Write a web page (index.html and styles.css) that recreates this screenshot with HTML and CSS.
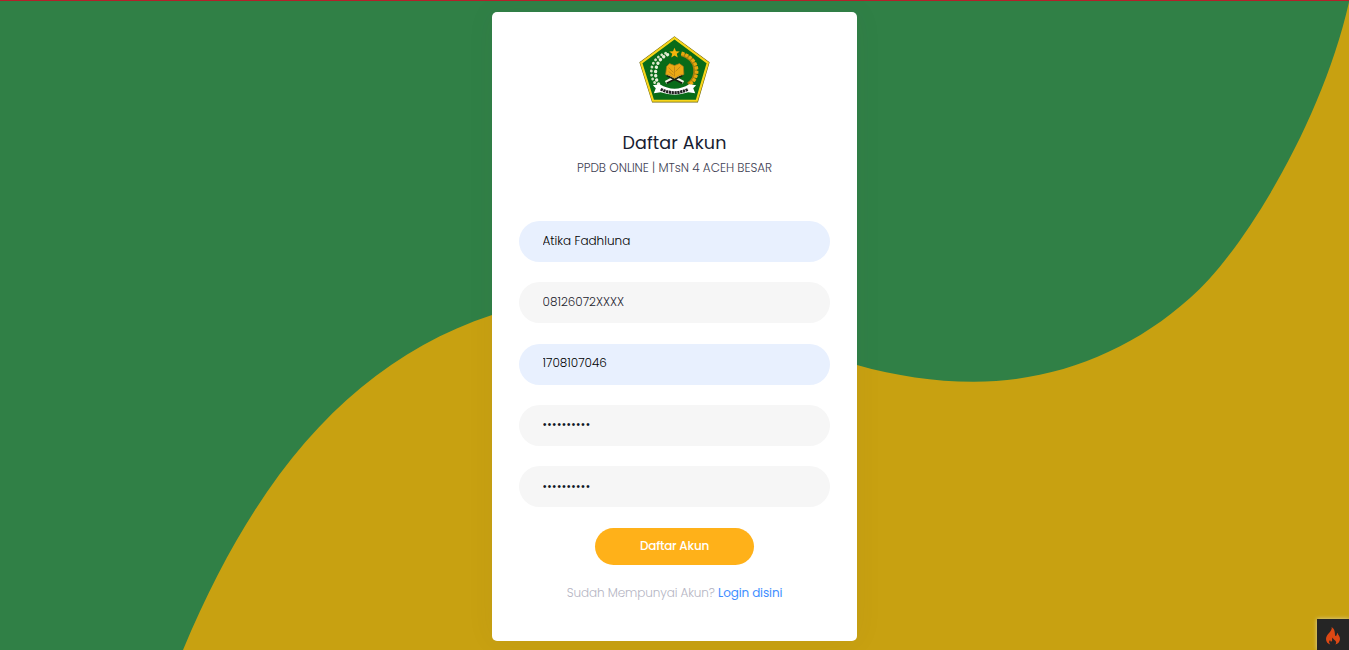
FILE: index.html
```html
<!DOCTYPE html>
<html lang="id">
<head>
<meta charset="utf-8">
<title>Daftar Akun</title>
<link rel="stylesheet" href="styles.css">
</head>
<body>
<svg class="wave" viewBox="0 0 1349 650" aria-hidden="true"><path fill="#c8a111" d="M183 650C258 470 356 360 492 315C640 268 710 327 857 365C896 376 934 381.700 973 381.700C1053 382 1130 352 1190 298C1243 252 1322 122 1349 2V650Z"/></svg>
<main class="card">
  <svg class="logo" viewBox="0 0 72 68" role="img" aria-label="Logo">
    <path d="M36 1.500L70.500 27 59 66.500H14L1.500 27Z" fill="#086b18" stroke="#6b640c" stroke-width="2"/>
    <path d="M36 2.200L69.800 27.200 58.500 65.700H14.300L2.200 27.200Z" fill="none" stroke="#f8d51c" stroke-width="2.200"/>
    <path d="M29 19C16 24 14 40 20 49" fill="none" stroke="#e8efd8" stroke-width="3.400" stroke-linecap="round" stroke-dasharray=".1 4.300"/>
    <path d="M27 17.500C10 23 10 41 16.500 48" fill="none" stroke="#d6e4c3" stroke-width="2.800" stroke-linecap="round" stroke-dasharray=".1 4"/>
    <path d="M43 18.500C61 24 60 42 50 49" fill="none" stroke="#a8800d" stroke-width="4"/>
    <path d="M43 17.500C62 23 62 42 51.500 49" fill="none" stroke="#e8a80e" stroke-width="3.500" stroke-dasharray="3 1.200"/>
    <path d="M36 12l1.500 3.500 3.800.2-3 2.400 1 3.800-3.300-2-3.300 2 1-3.800-3-2.400 3.800-.2z" fill="#f5b40b"/>
    <path d="M28 38l17 9M44 38l-17 9" stroke="#f4f4ea" stroke-width="3.200"/>
    <path d="M28 40l16 8M44 40l-16 8" stroke="#17200f" stroke-width="1.700"/>
    <path d="M28 31l3-3 5 2 5-2 4 3 .5 8-4.500 1-5 3-5-3-4-1z" fill="#eba914" stroke="#a87714" stroke-width=".7"/>
    <path d="M36 31v10M30 32l5 5M42 31l-5 5M30 36l5 4" stroke="#b88116" stroke-width=".8"/>
    <path d="M14 50l7-1q15 9 30 0l7 1-3 3 2 5-7-1q-14 5-28 0l-7 1 2-5z" fill="#fff"/>
    <path d="M22 54q14 7 28 0" fill="none" stroke="#222" stroke-width="3" stroke-dasharray="2.300 .6"/>
  </svg>
  <h1 class="title">Daftar Akun</h1>
  <p class="subtitle">PPDB ONLINE | MTsN 4 ACEH BESAR</p>
  <form class="form">
    <input class="field filled" value="Atika Fadhluna" aria-label="Nama">
    <input class="field" value="08126072XXXX" aria-label="Telepon">
    <input class="field filled" value="1708107046" aria-label="Nomor">
    <input class="field dots" value="••••••••••" aria-label="Password">
    <input class="field dots" value="••••••••••" aria-label="Ulangi password">
    <button class="submit" type="button">Daftar Akun</button>
  </form>
  <p class="login">Sudah Mempunyai Akun? <a href="#">Login disini</a></p>
</main>
<div class="debug"><svg width="16" height="18" viewBox="0 0 16 18"><path fill="#dd4814" d="M6.600 0C8 4 1 7 1 12c0 3 2 5 4.300 5.500C3.500 15.500 4 14 5.200 13c0 1 .5 1.700 1.200 1.600 1.600-.2-.1-2.200 1.400-4 .2 2.500 3.400 2.800 3.400 5 0 .8-.4 1.500-1 2 3-.7 4.800-3 4.800-5.600 0-3-2.200-4-2.500-6.200-.9 1-.4 2.700-1.500 3.100C8.800 9.500 11.500 3 6.600 0Z"/></svg></div>
</body>
</html>
```
FILE: styles.css
```css
* { box-sizing: border-box; }
body {
  position: relative;
  height: 650px;
  margin: 0;
  padding-top: 11px;
  overflow: hidden;
  background: #308046;
  border-top: 1px solid #b4202a;
  font-family: Poppins, Inter, "Liberation Sans", sans-serif;
}
.wave { position: absolute; z-index: -1; top: -1px; left: 0; width: 1349px; height: 650px; }
.card {
  display: flex;
  flex-direction: column;
  align-items: center;
  width: 365px;
  height: 629px;
  margin: 0 auto;
  padding-top: 24px;
  background: #fff;
  border-radius: 5px;
  box-shadow: 0 0 30px rgba(82, 63, 105, .05);
}
.logo { width: 71px; height: 67px; }
.title { margin: 26px 0 0; font-size: 17.55px; line-height: 28px; font-weight: 400; letter-spacing: .12px; color: #181c32; }
.subtitle { margin: 0; font-size: 12px; line-height: 22px; font-weight: 300; letter-spacing: -.03px; white-space: nowrap; color: #3f4254; }
.form { display: flex; flex-direction: column; align-items: center; gap: 20.3px; margin-top: 42px; }
.field {
  width: 311px;
  height: 41px;
  padding: 0 23.5px 2px;
  border: 0;
  border-radius: 21px;
  background: #f6f6f6;
  color: #24242f;
  font: 300 12px/18px Poppins, Inter, sans-serif;
}
.filled { background: #e8f0fe; color: #000; }
.dots { padding-bottom: 0; letter-spacing: .4px; color: #111827; }
.submit {
  width: 159px;
  height: 37px;
  margin-top: 1px;
  padding: 0 0 2px;
  border: 0;
  border-radius: 19px;
  background: #ffb119;
  color: #fff;
  font: 500 12px/18px Poppins, Inter, sans-serif;
  letter-spacing: -.22px;
}
.login { margin: 17px 0 0; font-size: 12px; line-height: 22px; font-weight: 300; letter-spacing: -.1px; white-space: nowrap; color: #b5b5c3; }
.login a { color: #3e8eff; text-decoration: none; font-weight: 400; letter-spacing: -.13px; }
.debug {
  position: absolute;
  right: 0;
  bottom: 0;
  display: flex;
  align-items: center;
  justify-content: center;
  width: 32px;
  height: 31px;
  padding-top: 2px;
  background: #252525;
  box-shadow: 0 0 4px #dfd8a6;
}
```
